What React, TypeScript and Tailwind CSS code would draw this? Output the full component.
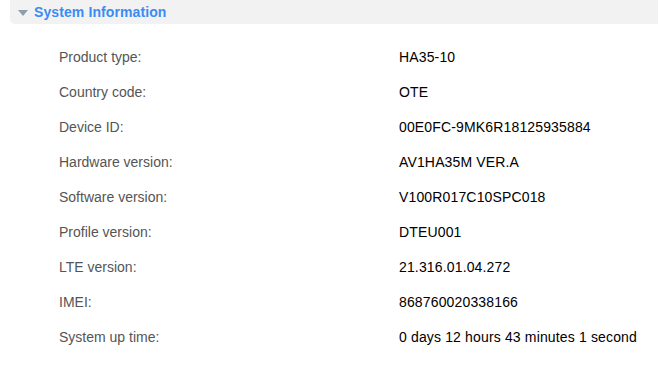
import React from "react";

const rows: [string, string][] = [
  ["Product type:", "HA35-10"],
  ["Country code:", "OTE"],
  ["Device ID:", "00E0FC-9MK6R18125935884"],
  ["Hardware version:", "AV1HA35M VER.A"],
  ["Software version:", "V100R017C10SPC018"],
  ["Profile version:", "DTEU001"],
  ["LTE version:", "21.316.01.04.272"],
  ["IMEI:", "868760020338166"],
  ["System up time:", "0 days 12 hours 43 minutes 1 second"],
];

export default function App() {
  return (
    <div className="w-[659px] h-[365px] bg-white overflow-hidden" style={{ fontFamily: '"Liberation Sans", Arial, sans-serif' }}>
      <div className="ml-[10px] mr-[1px] h-[24px] bg-[#f2f2f2] rounded-bl-[5px] flex items-center">
        <svg width="10" height="6" viewBox="0 0 10 6" className="ml-[8px] mt-[1px]">
          <polygon points="0,0 10,0 5,6" fill="#8e9eae" />
        </svg>
        <span className="ml-[6px] text-[14px] font-bold text-[#3a8cf5] leading-none tracking-[0.1px]">System Information</span>
      </div>
      <div className="mt-[16px] pl-[59px]">
        {rows.map(([k, v]) => (
          <div key={k} className="h-[35px] flex items-center text-[14px]">
            <div className="w-[340px] text-[#555555]">{k}</div>
            <div className="text-black tracking-[0.15px]">{v}</div>
          </div>
        ))}
      </div>
    </div>
  );
}
